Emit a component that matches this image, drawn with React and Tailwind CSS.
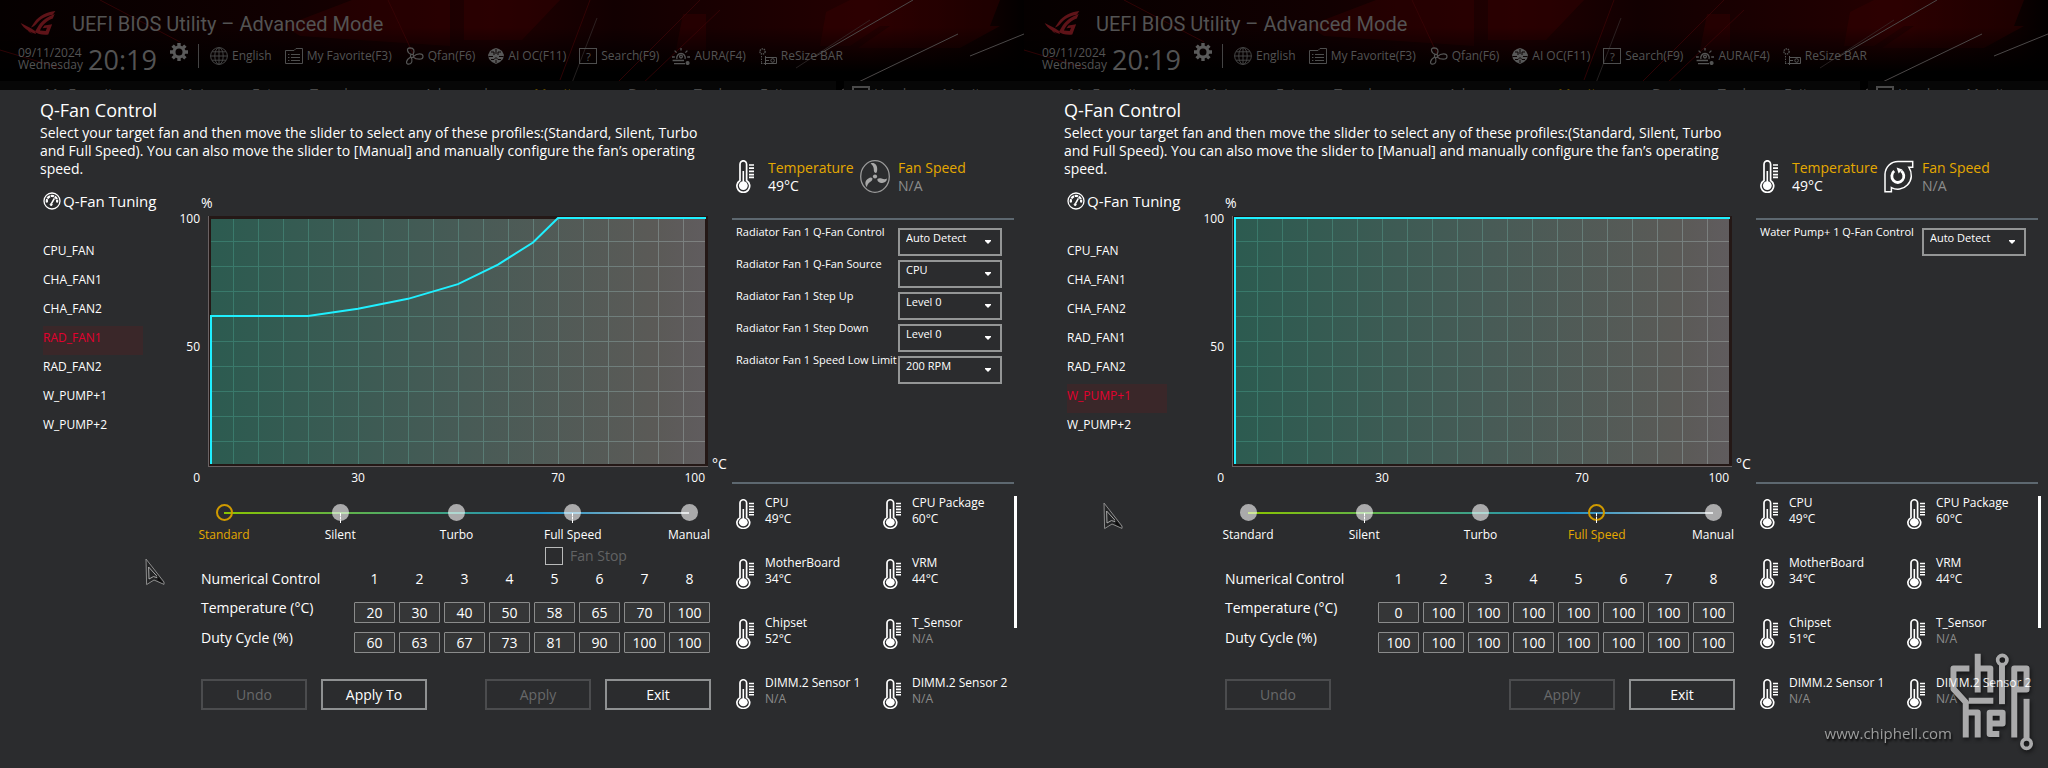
import React, { useState } from "react";

const fans = [
  "CPU_FAN",
  "CHA_FAN1",
  "CHA_FAN2",
  "RAD_FAN1",
  "RAD_FAN2",
  "W_PUMP+1",
  "W_PUMP+2",
];

const profiles = ["Standard", "Silent", "Turbo", "Full Speed", "Manual"];

const screens = [
  {
    id: "rad",
    fan: "RAD_FAN1",
    profile: "Standard",
    fanStop: true,
    applyTo: true,
    pump: false,
    temps: [20, 30, 40, 50, 58, 65, 70, 100],
    duty: [60, 63, 67, 73, 81, 90, 100, 100],
    settings: [
      ["Radiator Fan 1 Q-Fan Control", "Auto Detect"],
      ["Radiator Fan 1 Q-Fan Source", "CPU"],
      ["Radiator Fan 1 Step Up", "Level 0"],
      ["Radiator Fan 1 Step Down", "Level 0"],
      ["Radiator Fan 1 Speed Low Limit", "200 RPM"],
    ],
    chipset: "52°C",
    cursor: "left-[145px] top-[558px]",
  },
  {
    id: "pump",
    fan: "W_PUMP+1",
    profile: "Full Speed",
    fanStop: false,
    applyTo: false,
    pump: true,
    temps: [0, 100, 100, 100, 100, 100, 100, 100],
    duty: [100, 100, 100, 100, 100, 100, 100, 100],
    settings: [["Water Pump+ 1 Q-Fan Control", "Auto Detect"]],
    chipset: "51°C",
    cursor: "left-[79px] top-[502px]",
  },
];

/* ---------- icons ---------- */

function RogLogo() {
  return (
    <svg viewBox="58 24 112 80" className="w-9 h-[26px]" fill="#5e1318">
      <path d="M168 27C140 30 118 42 104 60L92 78C98 76 104 73 108 68C120 51 138 42 160 38Z" />
      <path d="M166 36C146 44 128 54 116 72L104 92C112 98 128 102 146 100L158 68L134 72L128 80L142 79L138 89L120 87C128 68 144 56 160 50Z" />
      <path d="M60 64L92 80L104 88L108 98C88 92 70 82 60 64Z" />
      <path d="M76 76C82 86 90 94 100 99L86 92Z" />
    </svg>
  );
}

function GearIcon() {
  return (
    <svg viewBox="0 0 18 18" className="w-[18px] h-[18px]">
      <circle cx="9" cy="9" r="5" fill="none" stroke="#5a5a5a" strokeWidth="3" />
      <g stroke="#5a5a5a" strokeWidth="3.4">
        <path d="M9 0V3M9 15V18M0 9H3M15 9H18M2.6 2.6L4.8 4.8M13.2 13.2L15.4 15.4M2.6 15.4L4.8 13.2M13.2 4.8L15.4 2.6" />
      </g>
    </svg>
  );
}

function GlobeIcon() {
  return (
    <svg viewBox="0 0 18 18" className="w-[18px] h-[18px]" fill="none" stroke="#444">
      <circle cx="9" cy="9" r="8.4" />
      <ellipse cx="9" cy="9" rx="4.2" ry="8.4" />
      <path d="M9 0.6V17.4M0.6 9H17.4M2 4.8H16M2 13.2H16" />
    </svg>
  );
}

function FolderIcon() {
  return (
    <svg viewBox="0 0 18 16" className="w-[18px] h-4" fill="none" stroke="#4e4e4e">
      <path d="M0.5 15.5V2.5H9L11 0.5H17.5V15.5Z" />
      <path d="M6 6.5H15M6 9.5H15M6 12.5H15M3 6.5H4.4M3 9.5H4.4M3 12.5H4.4" />
    </svg>
  );
}

function PropellerIcon() {
  return (
    <svg viewBox="0 0 19 18" className="w-[19px] h-[18px]" fill="none" stroke="#555" strokeWidth="1.2">
      <circle cx="7" cy="9" r="1.6" />
      <path d="M6.4 7.4C2 6 1 1 5 0.8C9 0.8 10 4 8 7.5" />
      <path d="M8.6 9.4C12 6 18 6 18 9.5C18 13 12 13 8.3 10.2" />
      <path d="M6 10.4C8 13 7 17.4 3.4 17.2C0.4 17 1 12.6 5.6 10" />
    </svg>
  );
}

function BrainIcon() {
  return (
    <svg viewBox="0 0 16 16" className="w-4 h-4">
      <path fill="#585858" d="M5 1L8 0L11 1L14 3L16 7L15 11L12 14L8 16L4 14L1 11L0 7L2 3Z" />
      <path
        fill="none"
        stroke="#0b0303"
        d="M8 1V6M3 4H6V7M13 4H10V7M0.5 8.5H5M11 8.5H15.5M3 11.5H6L8 9.5L10 11.5H13M8 12V15"
      />
    </svg>
  );
}

function SearchBoxIcon() {
  return (
    <span className="flex items-center justify-center w-[18px] h-4 border border-[#4e4e4e] text-[11px] leading-none">
      ?
    </span>
  );
}

function AuraIcon() {
  return (
    <svg viewBox="0 0 18 17" className="w-[18px] h-[17px]" fill="none" stroke="#555" strokeWidth="1.3">
      <path d="M5 11A4.2 4.2 0 1 1 13 11M9 0V2.6M2.6 2.6L4.6 4.6M15.4 2.6L13.4 4.6M0 9H2.8M15.2 9H18M0.6 12.5H12M2 15.6H13" />
      <circle cx="15.6" cy="15" r="1.4" fill="#555" />
      <circle cx="9" cy="8.6" r="1.4" />
    </svg>
  );
}

function ResizeIcon() {
  return (
    <svg viewBox="0 0 18 17" className="w-[18px] h-[17px]" fill="none" stroke="#555">
      <circle cx="3.5" cy="3.5" r="2.6" strokeDasharray="1.4 0.8" strokeWidth="1.4" />
      <path d="M2.5 8V15M6 15.5H2" strokeDasharray="1.4 1.2" />
      <path d="M6.5 8V17M6.5 9.5H17.5V15.5H6.5M6.5 12.5H10" />
      <circle cx="13.6" cy="12.5" r="1.8" />
    </svg>
  );
}

function TuningIcon() {
  return (
    <svg viewBox="0 0 18 18" className="w-[18px] h-[18px]" fill="none" stroke="#fff">
      <circle cx="9" cy="9" r="8" strokeWidth="1.3" />
      <path d="M4 10.5A5.2 5.2 0 1 1 14 10.5" strokeWidth="2.2" strokeDasharray="3.4 0.7" />
      <path d="M11.4 6.4L8.4 11.6" strokeWidth="1.6" />
      <circle cx="8.2" cy="12.6" r="1" fill="#fff" />
    </svg>
  );
}

function ThermometerIcon({ className }) {
  return (
    <svg viewBox="0 0 18 33" preserveAspectRatio="none" className={className}>
      <path
        d="M4 20.5V4.5A3.2 3.6 0 0 1 10.6 4.5V20.5A6.4 6.4 0 1 1 4 20.5Z"
        fill="none"
        stroke="#fff"
        strokeWidth="1.7"
      />
      <circle cx="7.3" cy="25.6" r="4.4" fill="#fff" />
      <path d="M7.3 11V24" stroke="#fff" strokeWidth="1.6" />
      <path d="M13 5H18M13 8.2H18M13 11.4H18M13 14.6H18M13 17.4H18" stroke="#fff" strokeWidth="1.7" />
    </svg>
  );
}

function FanIcon() {
  return (
    <svg viewBox="0 0 30 33" className="w-[30px] h-[33px]">
      <ellipse cx="15" cy="16.5" rx="14.3" ry="15.8" fill="none" stroke="#9a9a9a" strokeWidth="1.3" />
      <g fill="#a8a8a8">
        <circle cx="15" cy="16.5" r="2.1" />
        <path d="M10.6 3.4C14 2 17.6 4.6 17.2 9.4C17.2 11.4 16.6 12.6 15.8 13C14 12.4 13.8 11.4 13.8 9C13.6 6.6 12.6 5 10.6 3.4Z" />
        <path d="M27 18.6C26.8 22.4 23 24 19.6 22.4C17.8 21.6 17.2 20.4 17.4 19C18.6 18 20 18 21.6 18.6C23.8 19.4 25.4 19.4 27 18.6Z" />
        <path d="M7 27C4.4 24.8 5 20 8.4 18.4C10 17.4 11.6 17.4 12.4 18.2C12.6 19.8 12 20.8 10.4 21.8C8.4 23.2 7.2 24.6 7 27Z" />
      </g>
    </svg>
  );
}

function PumpIcon() {
  return (
    <svg viewBox="0 0 30 33" className="w-[30px] h-[33px]" fill="none" stroke="#fff">
      <path
        strokeWidth="1.5"
        d="M14 1.5H28.7V7.2H24.8C28.6 13 28.2 20 23.4 25C19 29.6 12.6 30.4 7.4 27.6V31.8H1V14C1.6 6.6 7 1.6 14 1.5Z"
      />
      <path strokeWidth="2.8" d="M10.2 11A6 6.4 0 1 0 17.2 10.8" />
      <path fill="#fff" stroke="none" d="M12.6 7.4L18.4 9.6L14.6 13.6Z" />
    </svg>
  );
}

function MousePointer({ className }) {
  return (
    <svg viewBox="0 0 20 28" className={`absolute w-5 h-7 pointer-events-none ${className}`}>
      <path d="M1 1L19 24V26.4L9 22L1.6 26.6Z" fill="#242526" stroke="#8d8d8d" />
      <path d="M3.6 9L13.6 20L8.4 18.6L4 21Z" fill="none" stroke="#b5b5b5" strokeWidth="0.9" />
      <path d="M12 17L18.6 25.6L12.6 22.4Z" fill="#0d0d0d" />
    </svg>
  );
}

function ForumMark() {
  return (
    <svg
      viewBox="626 608 258 304"
      className="w-[86px] h-[101px] opacity-60 drop-shadow-[1px_2px_2px_#000000]"
      fill="none"
      stroke="#fff"
      strokeWidth="18"
      strokeLinejoin="round"
    >
      <path d="M690 661H642V722L679 762V868M688 758H762M679 793H715V868" />
      <path d="M715 616V733M715 661H753V733" />
      <path d="M788 650V768" />
      <path d="M825 868V661H862V724H826" />
      <path d="M780 858H751V794H790V826H752" />
      <path d="M862 752V874" />
      <circle cx="789" cy="635" r="14" strokeWidth="11" />
      <circle cx="862" cy="887" r="14" strokeWidth="11" />
    </svg>
  );
}

/* ---------- header ---------- */

function HeaderArt() {
  return (
    <svg
      viewBox="0 0 1024 90"
      preserveAspectRatio="none"
      className="absolute inset-0 w-full h-full"
      aria-hidden="true"
    >
      <defs>
        <linearGradient id="headGlow" x1="0" x2="1" y1="0" y2="0">
          <stop offset="0" stopColor="#050000" />
          <stop offset="0.3" stopColor="#120001" />
          <stop offset="0.48" stopColor="#200001" />
          <stop offset="0.6" stopColor="#120001" />
          <stop offset="0.85" stopColor="#240001" />
          <stop offset="0.97" stopColor="#0c0000" />
          <stop offset="1" stopColor="#020000" />
        </linearGradient>
        <linearGradient id="headFade" x1="0" x2="0" y1="0" y2="1">
          <stop offset="0.3" stopColor="#000" stopOpacity="0" />
          <stop offset="0.8" stopColor="#000" />
        </linearGradient>
      </defs>
      <rect width="1024" height="90" fill="url(#headGlow)" />
      <g fill="#3a0002" opacity="0.4">
        <path d="M284 26L352 0H450V46L300 36Z" />
        <path d="M464 0H560L522 40H464Z" />
        <path d="M683 14H706V50H676Z" />
        <path d="M826 12L850 0H1000L990 26L880 26L850 46H820Z" />
        <path d="M890 26H1000L960 48H858Z" />
      </g>
      <rect width="1024" height="90" fill="url(#headFade)" />
      <g stroke="#3a0406" strokeWidth="0.8">
        <path d="M388 0L416 60M720 10L640 86M560 80L590 0M0 50L60 68M700 0L610 90M100 0L180 42" />
      </g>
      <g stroke="#4c4848">
        <path d="M913 0L816 56M958 34L842 90M1024 34L970 56" />
        <path d="M597 18L570 88M870 20L796 68" strokeWidth="0.6" stroke="#3c3636" />
      </g>
      <path d="M0 81H836V90H0ZM844 81H1024V90H844Z" fill="#070707" />
    </svg>
  );
}

function Header() {
  return (
    <header className="relative h-[90px] overflow-hidden bg-black text-[#535353]">
      <HeaderArt />
      <div className="relative flex flex-col h-full">
        <div className="flex items-start gap-4 pl-5 pt-[10px]">
          <RogLogo />
          <h1 className="font-[Roboto] text-xl leading-7">
            UEFI BIOS Utility – Advanced Mode
          </h1>
        </div>

        <div className="flex items-center h-9 shrink-0 pl-[18px] whitespace-nowrap">
          <div className="w-[70px] pt-[6px] text-xs leading-[12px]">
            <p>09/11/2024</p>
            <p>Wednesday</p>
          </div>
          <p className="w-[82px] pt-[8px] text-[27px] leading-9">20:19</p>
          <button type="button" aria-label="Settings" className="pb-2">
            <GearIcon />
          </button>
          <nav className="flex items-center h-6 ml-[10px] pl-[11px] gap-[13px] border-l border-[#444444] text-xs">
            <a href="#language" className="flex items-center gap-1">
              <GlobeIcon />
              English
            </a>
            <a href="#favorite" className="flex items-center gap-1">
              <FolderIcon />
              My Favorite(F3)
            </a>
            <a href="#qfan" className="flex items-center gap-1">
              <PropellerIcon />
              Qfan(F6)
            </a>
            <a href="#aioc" className="flex items-center gap-1">
              <BrainIcon />
              AI OC(F11)
            </a>
            <a href="#search" className="flex items-center gap-1">
              <SearchBoxIcon />
              Search(F9)
            </a>
            <a href="#aura" className="flex items-center gap-1">
              <AuraIcon />
              AURA(F4)
            </a>
            <a href="#rebar" className="flex items-center gap-1">
              <ResizeIcon />
              ReSize BAR
            </a>
          </nav>
        </div>

        {/* Tabs, mostly covered by the dialog */}
        <nav className="flex shrink-0 mt-[10px] pl-[45px] text-sm leading-5 whitespace-nowrap text-[#4a4a4a]">
          <a href="#fav" className="w-[135px]">My Favorites</a>
          <a href="#main" className="w-[72px]">Main</a>
          <a href="#extreme" className="w-[172px]">Extreme Tweaker</a>
          <a href="#advanced" className="w-[110px]">Advanced</a>
          <a href="#monitor" className="w-[94px] text-[#5c4600]">Monitor</a>
          <a href="#boot" className="w-[66px]">Boot</a>
          <a href="#tool" className="w-[66px]">Tool</a>
          <a href="#exit" className="w-[92px]">Exit</a>
          <span className="flex items-center gap-1">
            <span className="w-[18px] h-4 border-2 border-[#4a4a4a]" />
            Hardware Monitor
          </span>
        </nav>
      </div>
    </header>
  );
}

/* ---------- fan curve ---------- */

function FanCurve({ id, temps, duty }) {
  const x = (t) => Math.min(Math.max(5 * t, 3), 498);
  const y = (d) => 247 - d * 2.45;
  const first = `3,248 3,${y(duty[0])}`;
  const rest = temps.map((t, i) => `${x(t)},${y(duty[i])}`).join(" ");

  const cols = Array.from({ length: 19 }, (_, i) => 25 + i * 25);
  const rows = Array.from({ length: 9 }, (_, i) => 25 + i * 25);

  return (
    <svg
      viewBox="0 0 500 251"
      preserveAspectRatio="none"
      className="block w-full h-[251px]"
      role="img"
      aria-label="Fan duty cycle by temperature"
    >
      <defs>
        <linearGradient id={`${id}Area`} x1="0" x2="1" y1="0" y2="0">
          <stop offset="0" stopColor="#2c5b50" />
          <stop offset="0.5" stopColor="#475b56" />
          <stop offset="0.9" stopColor="#5b5a57" />
          <stop offset="1" stopColor="#605c5e" />
        </linearGradient>
        <linearGradient id={`${id}Grid`} gradientUnits="userSpaceOnUse" x1="0" x2="500" y1="0" y2="0">
          <stop offset="0" stopColor="#37796a" />
          <stop offset="0.5" stopColor="#557b73" />
          <stop offset="1" stopColor="#7f8080" />
        </linearGradient>
      </defs>
      <rect width="500" height="251" fill="#6a6263" />
      <rect x="1" width="499" height="250" fill="#241816" />
      <rect x="3" y="3" width="494" height="245" fill={`url(#${id}Area)`} />
      <g stroke={`url(#${id}Grid)`} shapeRendering="crispEdges">
        {cols.map((c) => (
          <path key={c} d={`M${c} 3L${c + 0.01} 248`} />
        ))}
        {rows.map((r) => (
          <path key={r} d={`M3 ${r}L497 ${r + 0.01}`} />
        ))}
      </g>
      <polyline points={`${first} ${rest}`} fill="none" stroke="#1ff0ff" strokeWidth="2" />
    </svg>
  );
}

/* ---------- dialog parts ---------- */

function FanList({ current }) {
  return (
    <aside className="w-[142px] shrink-0 pl-[3px]">
      <h3 className="flex items-center gap-[2px] text-[15px] leading-5 whitespace-nowrap">
        <TuningIcon />
        Q-Fan Tuning
      </h3>
      <ul className="mt-7 w-[100px] text-xs">
        {fans.map((name) => (
          <li key={name}>
            <button
              type="button"
              className={
                name === current
                  ? "block w-full h-[29px] pb-[6px] text-left bg-[#3a2729] text-[#e4002f]"
                  : "block w-full h-[29px] pb-[6px] text-left"
              }
            >
              {name}
            </button>
          </li>
        ))}
      </ul>
    </aside>
  );
}

function ProfileSlider({ id, value, onChange }) {
  return (
    <fieldset className="relative mt-[18px] ml-[9px] mr-[10px]">
      <div className="absolute left-[33px] right-[33px] top-[8px] h-[2px] bg-[linear-gradient(90deg,#8ac400,#56ae5c_33%,#1b8fc4_68%,#c0c4c6)]" />
      <div className="flex justify-between">
        {profiles.map((name) => (
          <label
            key={name}
            className={
              name === value
                ? "relative flex flex-col items-center gap-[6px] w-[66px] text-xs leading-4 whitespace-nowrap text-[#e5a900]"
                : "relative flex flex-col items-center gap-[6px] w-[66px] text-xs leading-4 whitespace-nowrap"
            }
          >
            <input
              type="radio"
              name={`${id}-profile`}
              checked={name === value}
              onChange={() => onChange(name)}
              className="appearance-none w-[17px] h-[17px] rounded-full bg-white/60 checked:bg-transparent checked:border-2 checked:border-[#cf9a00]"
            />
            {(name === "Silent" || name === "Full Speed") && (
              <span className="absolute top-[9px] h-[10px] border-l border-dashed border-white" />
            )}
            {name}
          </label>
        ))}
      </div>
    </fieldset>
  );
}

function NumberRow({ label, values }) {
  return (
    <tr className="h-[30px]">
      <th scope="row" className="text-left font-normal">{label}</th>
      {values.map((v, i) => (
        <td key={i} className="w-[45px] align-bottom">
          <input
            type="text"
            aria-label={`${label} ${i + 1}`}
            defaultValue={v}
            className="block w-[41px] h-[21px] mx-auto text-center bg-[#353637] border border-[#8a8b8b] rounded-[1px]"
          />
        </td>
      ))}
    </tr>
  );
}

function ActionButton({ disabled, children }) {
  return (
    <button
      type="button"
      disabled={disabled}
      className="w-[106px] h-[31px] border-2 border-[#8f9192] text-sm disabled:border-[#4b4c4e] disabled:text-[#68696a]"
    >
      {children}
    </button>
  );
}

function Setting({ id, label, value }) {
  return (
    <div className="flex items-start h-8">
      <label htmlFor={id} className="w-[162px] shrink-0 text-[11px] leading-4 whitespace-nowrap">
        {label}
      </label>
      <div className="relative mt-1">
        <select
          id={id}
          className="block appearance-none w-[104px] h-7 pl-[6px] pb-[9px] border-2 border-[#949696] bg-transparent text-[11px] leading-[14px]"
        >
          <option>{value}</option>
        </select>
        <svg viewBox="0 0 6 4" className="absolute right-[11px] top-3 w-[6px] h-1 pointer-events-none">
          <path d="M0 0H6V1L3 4L0 1Z" fill="#fff" />
        </svg>
      </div>
    </div>
  );
}

function Sensor({ name, value }) {
  return (
    <div className="flex items-start h-[60px] gap-[11px] text-xs leading-4 whitespace-nowrap">
      <ThermometerIcon className="w-[18px] h-[30px] mt-1" />
      <dl>
        <dt>{name}</dt>
        <dd className={value === "N/A" ? "text-[#8c8c8c]" : ""}>{value}</dd>
      </dl>
    </div>
  );
}

function QFanDialog({ screen }) {
  const [profile, setProfile] = useState(screen.profile);

  const sensors = [
    ["CPU", "49°C"],
    ["CPU Package", "60°C"],
    ["MotherBoard", "34°C"],
    ["VRM", "44°C"],
    ["Chipset", screen.chipset],
    ["T_Sensor", "N/A"],
    ["DIMM.2 Sensor 1", "N/A"],
    ["DIMM.2 Sensor 2", "N/A"],
  ];

  return (
    <main className="flex flex-1 bg-[#2b2c2e]">
      <div className="flex-1 pl-10 pb-14">
        <h2 className="pt-2 pb-[2px] text-lg leading-6">Q-Fan Control</h2>
        <p className="text-sm leading-[18px] whitespace-nowrap">
          Select your target fan and then move the slider to select any of these profiles:(Standard, Silent, Turbo
          <br />
          and Full Speed). You can also move the slider to [Manual] and manually configure the fan’s operating
          <br />
          speed.
        </p>

        <div className="flex mt-[13px]">
          <FanList current={screen.fan} />

          <section className="flex-1">
            <p className="pl-[19px] pt-1 text-sm leading-4">%</p>
            <div className="flex text-xs leading-4">
              <div className="flex flex-col justify-between w-[18px] h-[275px] items-end">
                <span>100</span>
                <span className="pb-1">50</span>
                <span>0</span>
              </div>
              <div className="flex-1 ml-2 pt-[5px]">
                <FanCurve id={screen.id} temps={screen.temps} duty={screen.duty} />
                <div className="flex mt-[3px] text-center">
                  <span className="w-[60%]">30</span>
                  <span className="w-[20%]">70</span>
                  <span className="flex-1 pr-[3px] text-right">100</span>
                </div>
              </div>
              <span className="w-5 ml-1 mt-[245px] text-sm leading-4">°C</span>
            </div>

            <ProfileSlider id={screen.id} value={profile} onChange={setProfile} />

            <div className="h-[18px] mt-1 ml-[363px]">
              {screen.fanStop && (
                <label className="flex items-center gap-[7px] text-sm leading-[18px] text-[#626364]">
                  <input
                    type="checkbox"
                    className="appearance-none w-[18px] h-[18px] border border-[#b9baba]"
                  />
                  Fan Stop
                </label>
              )}
            </div>

            <div className="ml-[19px] mr-5 text-sm">
              <table className="w-full table-fixed">
                <thead>
                  <tr className="h-7">
                    <th scope="col" className="text-left font-normal">Numerical Control</th>
                    {screen.temps.map((_, i) => (
                      <th key={i} scope="col" className="w-[45px] font-normal">{i + 1}</th>
                    ))}
                  </tr>
                </thead>
                <tbody>
                  <NumberRow label="Temperature (°C)" values={screen.temps} />
                  <NumberRow label="Duty Cycle (%)" values={screen.duty} />
                </tbody>
              </table>

              <div className="flex gap-[14px] mt-[26px] pr-px">
                <ActionButton disabled>Undo</ActionButton>
                {screen.applyTo && <ActionButton>Apply To</ActionButton>}
                <span className="flex-1" />
                <ActionButton disabled>Apply</ActionButton>
                <ActionButton>Exit</ActionButton>
              </div>
            </div>
          </section>
        </div>
      </div>

      <aside className="w-[292px] shrink-0 pt-[69px]">
        <div className="flex h-[59px] pl-1 text-sm leading-[18px]">
          <ThermometerIcon className="w-[18px] h-[33px] mt-px" />
          <dl className="w-[92px] pl-[14px]">
            <dt className="text-[#e5a900]">Temperature</dt>
            <dd>49°C</dd>
          </dl>
          <span className="ml-[14px] mr-2 pt-px">{screen.pump ? <PumpIcon /> : <FanIcon />}</span>
          <dl>
            <dt className="text-[#e5a900] whitespace-nowrap">Fan Speed</dt>
            <dd className="text-[#8c8c8c]">N/A</dd>
          </dl>
        </div>

        <div className="w-[282px] h-[266px] pl-1 pr-3 pt-1 border-y-2 border-[#5d6870]">
          {screen.settings.map(([label, value], i) => (
            <Setting key={label} id={`${screen.id}-setting-${i}`} label={label} value={value} />
          ))}
        </div>

        <div className="flex pt-[11px]">
          <div className="grid grid-cols-[147px_1fr] w-[282px] pl-1">
            {sensors.map(([name, value]) => (
              <Sensor key={name} name={name} value={value} />
            ))}
          </div>
          <div className="w-[3px] h-[132px] mt-px bg-white" />
        </div>
      </aside>
    </main>
  );
}

export default function App() {
  return (
    <div className="relative flex min-h-screen overflow-hidden bg-[#2b2c2e] font-['Open_Sans','Noto_Sans',sans-serif] text-white">
      {screens.map((screen) => (
        <div key={screen.id} className="relative flex flex-col flex-1 min-w-0">
          <Header />
          <QFanDialog screen={screen} />
          <MousePointer className={screen.cursor} />
        </div>
      ))}

      {/* Forum watermark */}
      <div className="absolute right-[14px] bottom-4 flex items-end pointer-events-none">
        <span className="-mr-1 pb-[7px] text-[15px] leading-6 text-[#9c9d9d] drop-shadow-[1px_2px_1px_#000000]">
          www.chiphell.com
        </span>
        <ForumMark />
      </div>
    </div>
  );
}
